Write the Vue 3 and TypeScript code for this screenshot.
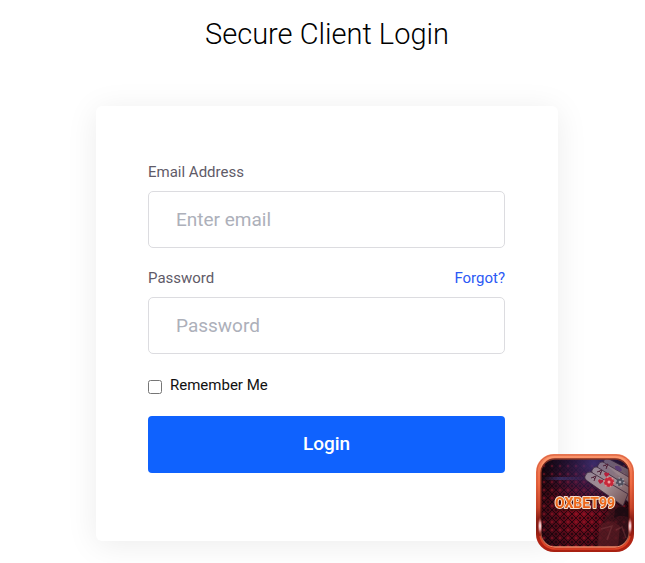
<script setup lang="ts">
import { ref } from 'vue'

const email = ref('')
const password = ref('')
const remember = ref(false)
</script>

<template>
  <main class="page">
    <h1 class="title">Secure Client Login</h1>

    <form class="card" @submit.prevent>
      <div class="field">
        <div class="label-row">
          <label for="email">Email Address</label>
        </div>
        <input id="email" v-model="email" class="control" type="email" placeholder="Enter email" />
      </div>

      <div class="field">
        <div class="label-row">
          <label for="password">Password</label>
          <a class="forgot" href="#forgot">Forgot?</a>
        </div>
        <input id="password" v-model="password" class="control" type="password" placeholder="Password" />
      </div>

      <div class="remember">
        <input id="remember" v-model="remember" class="check" type="checkbox" />
        <label for="remember">Remember Me</label>
      </div>

      <button class="submit" type="submit">Login</button>
    </form>

    <a class="badge" href="#oxbet99">
      <svg viewBox="0 0 98 98" role="img" aria-label="OXBET99">
        <defs>
          <linearGradient id="frame" x1="0" y1="0" x2="0" y2="1">
            <stop offset="0" stop-color="#f5875f" />
            <stop offset="0.3" stop-color="#ee6a42" />
            <stop offset="0.55" stop-color="#c8452a" />
            <stop offset="0.66" stop-color="#8a1f16" />
            <stop offset="0.75" stop-color="#7a1712" />
            <stop offset="0.88" stop-color="#b52413" />
            <stop offset="1" stop-color="#a81d10" />
          </linearGradient>
          <linearGradient id="rim" x1="0" y1="0" x2="0" y2="1">
            <stop offset="0" stop-color="#7c3024" />
            <stop offset="0.5" stop-color="#6b1a15" />
            <stop offset="0.75" stop-color="#3a0a0c" />
            <stop offset="1" stop-color="#f08a68" />
          </linearGradient>
          <radialGradient id="base" cx="0.45" cy="0.62" r="0.62">
            <stop offset="0" stop-color="#7e0b1c" />
            <stop offset="0.5" stop-color="#520a18" />
            <stop offset="1" stop-color="#16060e" />
          </radialGradient>
          <radialGradient id="glow" cx="0.6" cy="0.05" r="0.6">
            <stop offset="0" stop-color="#453580" stop-opacity="0.8" />
            <stop offset="1" stop-color="#2a1650" stop-opacity="0" />
          </radialGradient>
          <linearGradient id="beam" x1="0" y1="0" x2="1" y2="0">
            <stop offset="0" stop-color="#4a4ea0" stop-opacity="0" />
            <stop offset="0.4" stop-color="#4550a0" stop-opacity="0.45" />
            <stop offset="1" stop-color="#4a4ea0" stop-opacity="0" />
          </linearGradient>
          <linearGradient id="paper" gradientUnits="userSpaceOnUse" x1="52" y1="12" x2="92" y2="50">
            <stop offset="0" stop-color="#8f8294" />
            <stop offset="0.5" stop-color="#a48f93" />
            <stop offset="1" stop-color="#6c4c50" />
          </linearGradient>
          <radialGradient id="shine">
            <stop offset="0" stop-color="#ffffff" />
            <stop offset="0.45" stop-color="#f1b2b4" stop-opacity="0.85" />
            <stop offset="1" stop-color="#c24a46" stop-opacity="0" />
          </radialGradient>
          <linearGradient id="lettering" x1="0" y1="0" x2="0" y2="1">
            <stop offset="0" stop-color="#f47a22" />
            <stop offset="1" stop-color="#e2520f" />
          </linearGradient>
          <pattern id="suits" width="8" height="8" patternUnits="userSpaceOnUse">
            <path d="M0 0L8 8M8 0L0 8" fill="none" stroke="#0c0308" stroke-width="1" />
            <path d="M4 -1.500L5.500 0L4 1.500L2.500 0ZM4 6.500L5.500 8L4 9.500L2.500 8Z" fill="#10030a" />
            <path d="M0 2.500L1.500 4L0 5.500L-1.500 4ZM8 2.500L9.500 4L8 5.500L6.500 4Z" fill="#b0182a" opacity="0.7" />
          </pattern>
          <clipPath id="inside">
            <rect x="5" y="5" width="88" height="88" rx="14" />
          </clipPath>
        </defs>

        <rect width="98" height="98" rx="18" fill="url(#frame)" />
        <rect x="1" y="1" width="96" height="96" rx="17" fill="none" stroke="#ad2e1c" stroke-opacity="0.4" />
        <path d="M5 14Q8 3 19 3H79Q90 3 93 14" fill="none" stroke="#ffa57c" stroke-width="1.500" opacity="0.6" />
        <path d="M4 82Q7 94 19 95H79Q91 94 94 82" fill="none" stroke="#dd4427" stroke-width="1.500" />

        <g clip-path="url(#inside)">
          <rect x="5" y="5" width="88" height="88" fill="url(#base)" />
          <rect x="5" y="5" width="88" height="88" fill="url(#suits)" opacity="0.7" />
          <rect x="5" y="5" width="88" height="88" fill="url(#glow)" />
          <rect x="5" y="23" width="48" height="3" fill="url(#beam)" />

          <g fill="url(#paper)" stroke="#3a2438" stroke-width="0.800">
            <path d="M68 6Q70 3 73 5L98 18V34L68 10Q67 8 68 6Z" opacity="0.6" />
            <path d="M62 11Q64 7 67 8L96 25V42L62 15Q61 13 62 11Z" opacity="0.8" />
            <path d="M56 16Q58 12 61 13L95 34V50L57 20Q55 18 56 16Z" />
            <path d="M49 22Q51 17 55 18L92 40L87 52L50 26Q48 24 49 22Z" />
          </g>
          <g fill="none" stroke="#512239" stroke-width="1">
            <path d="M55 24L60 22L58 27M57 23L59 25" />
            <path d="M61 18L66 16L64 21M63 17L65 19" />
            <path d="M67 12L72 10L70 15M69 11L71 13" />
          </g>
          <path d="M62 27q1-3 3-1q3-1 2 2l-3 2zM68 20q1-3 3-1q3-1 2 2l-3 2z" fill="#b51f3b" />
          <path d="M79 12q5-1 7 4q-2 3-4 0q-3 1-3-4z" fill="#593c74" />

          <path d="M72 58Q74 50 82 51Q92 52 95 62V96H60Q62 76 72 58Z" fill="#3c141c" opacity="0.65" />
          <path d="M79 56Q86 49 93 57L96 65Q86 59 78 64Z" fill="#140810" opacity="0.7" />
          <path d="M63 70L76 67L84 72L82 94H62Z" fill="#6a2228" opacity="0.45" />
          <path d="M65 75L76 72L71 86M80 76L86 73L90 84" fill="none" stroke="#8e4a4c" stroke-width="1.500" opacity="0.35" />

          <circle cx="73" cy="28" r="5" fill="#c9283a" />
          <circle cx="73" cy="28" r="4.800" fill="none" stroke="#e0888a" stroke-width="1.500" stroke-dasharray="1.500 3.500" />
          <circle cx="73" cy="28" r="1.500" fill="#eea0a0" />
          <circle cx="84" cy="28" r="4" fill="#50505e" />
          <circle cx="84" cy="28" r="4" fill="none" stroke="#a5a0aa" stroke-width="1.500" stroke-dasharray="1.500 2.700" />
          <circle cx="84" cy="28" r="1.300" fill="#a5a0aa" />
        </g>

        <rect x="5" y="5" width="88" height="88" rx="14" fill="none" stroke="url(#rim)" stroke-width="1.300" />
        <ellipse cx="4" cy="72" rx="2.500" ry="9" fill="url(#shine)" />
        <ellipse cx="94" cy="72" rx="2.500" ry="9" fill="url(#shine)" />
        <text class="badge-shadow" x="49" y="55" text-anchor="middle">OXBET99</text>
        <text class="badge-text" x="49" y="54" text-anchor="middle" fill="url(#lettering)">OXBET99</text>
      </svg>
    </a>
  </main>
</template>

<style>
body {
  background: #fff;
}
</style>

<style scoped>
.page {
  padding: 14px 87px 22px 96px;
  font-family: Roboto, "Liberation Sans", sans-serif;
  font-size: 15px;
  line-height: 20px;
  color: #111;
}

.title {
  margin: 0 0 52px;
  font-size: 29px;
  font-weight: 300;
  line-height: 40px;
  text-align: center;
  color: #000;
}

.card {
  box-sizing: border-box;
  padding: 56px 53px 68px 52px;
  border-radius: 6px;
  background: #fff;
  box-shadow: 0 4px 32px rgba(0, 0, 0, 0.08);
}

.field {
  margin-bottom: 20px;
}

.label-row {
  display: flex;
  justify-content: space-between;
  margin-bottom: 9px;
  color: #5f5b68;
}

.forgot {
  color: #2b59f5;
  text-decoration: none;
}

.control {
  display: block;
  box-sizing: border-box;
  width: 100%;
  height: 57px;
  padding: 0 27px;
  border: 1px solid #dcdce0;
  border-radius: 5px;
  background: #fff;
  font: inherit;
  font-size: 19px;
  color: #222;
}

.control::placeholder {
  color: #adb0ba;
  opacity: 1;
}

.remember {
  display: flex;
  align-items: center;
  gap: 8px;
  padding-top: 1px;
  margin-bottom: 21px;
}

.check {
  width: 14px;
  height: 14px;
  margin: 4px 0 0;
}

.submit {
  display: block;
  width: 100%;
  height: 57px;
  padding: 0 0 2px;
  border: 0;
  border-radius: 4px;
  background: #0f62fe;
  font: inherit;
  font-size: 19px;
  font-weight: 500;
  color: #fff;
  cursor: pointer;
}

.badge {
  position: fixed;
  right: 11px;
  bottom: 11px;
  width: 98px;
  height: 98px;
}

.badge svg {
  display: block;
  width: 100%;
  height: 100%;
}

.badge-text,
.badge-shadow {
  font-family: Roboto, "Liberation Sans", sans-serif;
  font-size: 14px;
  font-weight: 700;
  paint-order: stroke;
  stroke: #f4dfcf;
  stroke-width: 2px;
  stroke-linejoin: round;
}

.badge-shadow {
  fill: #4a1010;
  stroke: #4a1010;
  stroke-width: 3px;
}
</style>
